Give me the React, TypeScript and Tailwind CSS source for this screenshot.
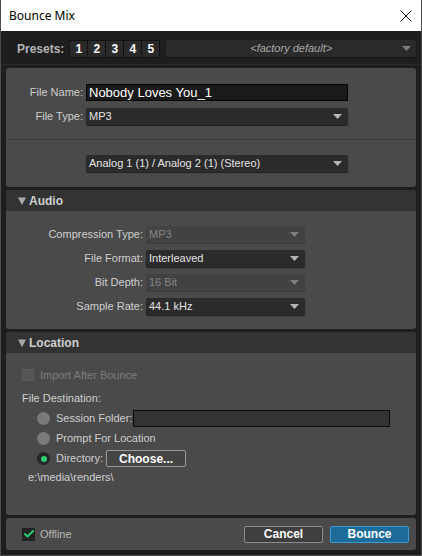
import { Check } from "lucide-react";

const font = { fontFamily: '"Liberation Sans", Arial, sans-serif' };

const Arrow = ({ dim = false }: { dim?: boolean }) => (
  <svg width="9" height="5" viewBox="0 0 9 5" className="shrink-0">
    <path d="M0 0 H9 L4.5 5 Z" fill={dim ? "#7d7d7d" : "#b8b8b8"} />
  </svg>
);

const Select = ({
  value,
  width,
  disabled = false,
}: {
  value: string;
  width: string;
  disabled?: boolean;
}) => (
  <div
    className={`${width} h-[17px] flex items-center justify-between pl-[3px] pr-[6px] rounded-[2px] text-[11px] ${
      disabled
        ? "bg-[#424242] text-[#858585] shadow-[0_1px_0_#3a3a3a]"
        : "bg-[#2b2b2b] text-[#e4e4e4] shadow-[0_1px_1px_#202020]"
    }`}
  >
    <span>{value}</span>
    <Arrow dim={disabled} />
  </div>
);

const SectionHeader = ({ title }: { title: string }) => (
  <div className="h-[21px] bg-[#333333] flex items-center pl-[12px] gap-[3px] text-[12px] font-bold text-[#cfcfcf] rounded-t-[3px]">
    <svg width="8" height="8" viewBox="0 0 8 8">
      <path d="M0 0.5 H8 L4 8 Z" fill="#a9a9a9" />
    </svg>
    <span>{title}</span>
  </div>
);

const Radio = ({ on = false }: { on?: boolean }) =>
  on ? (
    <div className="w-[13px] h-[13px] rounded-full bg-[#262626] flex items-center justify-center">
      <div className="w-[6px] h-[6px] rounded-full bg-[#2ecc71]" />
    </div>
  ) : (
    <div className="w-[13px] h-[13px] rounded-full bg-[#7a7a7a]" />
  );

export default function App() {
  return (
    <div
      className="w-[422px] h-[556px] flex flex-col border-x border-b border-[#4d4d4d] bg-[#1e1e1e] overflow-hidden"
      style={font}
    >
      {/* title bar */}
      <div className="h-[31px] bg-white flex items-center justify-between pl-[8px] pr-[9px] shrink-0">
        <span
          className="text-[12px] text-black"
          style={{ fontFamily: '"Noto Sans", "Open Sans", sans-serif' }}
        >
          Bounce Mix
        </span>
        <svg width="12" height="12" viewBox="0 0 12 12">
          <path d="M0.5 0.5 L11.5 11.5 M11.5 0.5 L0.5 11.5" stroke="#111" strokeWidth="1" />
        </svg>
      </div>

      {/* presets */}
      <div className="h-[34px] shrink-0 flex items-center pl-[16px] pr-[5px] pt-[2px] border-b border-[#2c2c2c]">
        <span className="text-[12px] font-bold text-[#b4b4b4] mr-[5px]">Presets:</span>
        <div className="flex">
          {["1", "2", "3", "4", "5"].map((n) => (
            <div
              key={n}
              className="w-[19px] h-[18px] flex items-center justify-center bg-[#2a2a2a] border border-[#121212] text-[12px] font-bold text-white -ml-px first:ml-0"
            >
              {n}
            </div>
          ))}
        </div>
        <div className="ml-[6px] flex-1 h-[17px] relative flex items-center justify-center bg-[#2a2a2a] rounded-[2px] shadow-[0_1px_0_#141414] text-[11px] italic text-[#a8a8a8]">
          &lt;factory default&gt;
          <div className="absolute right-[5px] top-[6px]">
            <Arrow dim />
          </div>
        </div>
      </div>

      <div className="flex-1 flex flex-col gap-[3px] px-[5px] pt-[3px] pb-[5px]">
        {/* file panel */}
        <div className="h-[119px] bg-[#4a4a4a] rounded-[3px] flex flex-col text-[11px] text-[#cfcfcf]">
          <div className="flex flex-col gap-[7px] pt-[16px]">
            <div className="flex items-center h-[17px]">
              <span className="w-[80px] text-right pr-[3px]">File Name:</span>
              <div className="w-[262px] h-[17px] bg-[#1a1a1a] border border-[#050505] flex items-center pl-[2px] text-[13px] text-white">
                Nobody Loves You_1
              </div>
            </div>
            <div className="flex items-center h-[17px]">
              <span className="w-[80px] text-right pr-[3px]">File Type:</span>
              <Select value="MP3" width="w-[262px]" />
            </div>
          </div>
          <div className="mt-[14px] border-t border-[#3a3a3a]" />
          <div className="pt-[15px] pl-[80px]">
            <Select value="Analog 1 (1) / Analog 2 (1) (Stereo)" width="w-[262px]" />
          </div>
        </div>

        {/* audio panel */}
        <div className="h-[139px] bg-[#4a4a4a] rounded-[3px] flex flex-col text-[11px] text-[#cfcfcf]">
          <SectionHeader title="Audio" />
          <div className="flex flex-col gap-[7px] pt-[15px]">
            {[
              { l: "Compression Type:", v: "MP3", d: true },
              { l: "File Format:", v: "Interleaved", d: false },
              { l: "Bit Depth:", v: "16 Bit", d: true },
              { l: "Sample Rate:", v: "44.1 kHz", d: false },
            ].map((r) => (
              <div key={r.l} className="flex items-center h-[17px]">
                <span className="w-[140px] text-right pr-[3px]">{r.l}</span>
                <Select value={r.v} width="w-[159px]" disabled={r.d} />
              </div>
            ))}
          </div>
        </div>

        {/* location panel */}
        <div className="h-[183px] bg-[#4a4a4a] rounded-[3px] flex flex-col text-[11px] text-[#cfcfcf]">
          <SectionHeader title="Location" />
          <div className="flex flex-col pl-[16px] pt-[15px]">
            <div className="flex items-center gap-[6px] h-[14px] text-[#7c7c7c]">
              <div className="w-[12px] h-[12px] bg-[#555555] border border-[#5c5c5c]" />
              <span>Import After Bounce</span>
            </div>
            <div className="mt-[9px] h-[14px] flex items-center">File Destination:</div>
            <div className="flex flex-col gap-[7px] pl-[15px] mt-[7px]">
              <div className="flex items-center h-[13px]">
                <Radio />
                <span className="ml-[6px]">Session Folder:</span>
                <div className="ml-[1px] w-[257px] h-[17px] bg-[#333333] border border-[#0a0a0a]" />
              </div>
              <div className="flex items-center h-[13px]">
                <Radio />
                <span className="ml-[6px]">Prompt For Location</span>
              </div>
              <div className="flex items-center h-[13px]">
                <Radio on />
                <span className="ml-[6px]">Directory:</span>
                <div className="ml-[3px] w-[80px] h-[17px] flex items-center justify-center border border-[#9a9a9a] rounded-[2px] bg-[#444444] font-bold text-white text-[12px]">
                  Choose...
                </div>
              </div>
            </div>
            <div className="mt-[5px] h-[14px] flex items-center pl-[6px]">e:\media\renders\</div>
          </div>
        </div>

        {/* footer */}
        <div className="h-[32px] bg-[#4a4a4a] rounded-[3px] flex items-center pl-[16px] pr-[7px] text-[12px] text-[#cfcfcf]">
          <div className="w-[13px] h-[13px] bg-[#222222] flex items-center justify-center">
            <Check size={12} strokeWidth={4} color="#2ecc71" />
          </div>
          <span className="ml-[5px] text-[11px] text-[#b8b8b8]">Offline</span>
          <div className="ml-auto flex gap-[7px]">
            <div className="w-[79px] h-[17px] flex items-center justify-center border border-[#8c8c8c] rounded-[2px] bg-[#3e3e3e] font-bold text-white">
              Cancel
            </div>
            <div className="w-[79px] h-[17px] flex items-center justify-center border border-[#3d9ad6] rounded-[2px] bg-[#1d6b99] font-bold text-white">
              Bounce
            </div>
          </div>
        </div>
      </div>
    </div>
  );
}
